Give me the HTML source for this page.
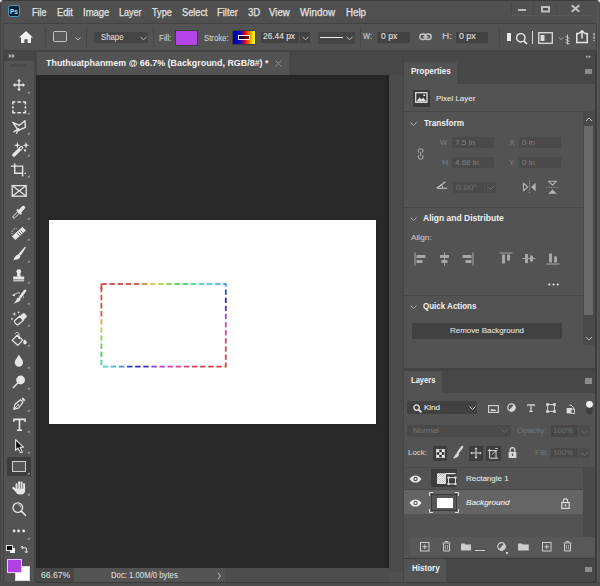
<!DOCTYPE html>
<html><head><meta charset="utf-8">
<style>
*{margin:0;padding:0;box-sizing:border-box}
html,body{width:600px;height:586px;overflow:hidden;background:#505050}
body{position:relative;font-family:"Liberation Sans",sans-serif}
.a{position:absolute;display:block;overflow:visible}
.t{position:absolute;white-space:nowrap;line-height:1;transform-origin:0 0}
</style></head>
<body>
<div class="a" style="left:0px;top:0px;width:600px;height:586px;background:#505050;"></div>
<div class="a" style="left:0px;top:0px;width:600px;height:1px;background:#3a3a3a;"></div>
<div class="a" style="left:0px;top:0px;width:1px;height:586px;background:#434343;"></div>
<div class="a" style="left:1px;top:23px;width:2px;height:563px;background:#525252;"></div>
<div class="a" style="left:597px;top:4px;width:1px;height:582px;background:#5a5a5a;"></div>
<div class="a" style="left:7.7px;top:5px;width:12.5px;height:12px;background:#0a2236;border:1.2px solid #4a9cc2;border-radius:2.5px"></div>
<div class="a" style="left:511px;top:0px;width:1px;height:16px;background:#484848;"></div>
<div class="a" style="left:533px;top:0px;width:1px;height:16px;background:#484848;"></div>
<div class="a" style="left:556px;top:0px;width:1px;height:16px;background:#484848;"></div>
<div class="a" style="left:511px;top:15px;width:82px;height:1px;background:#595959;"></div>
<div class="a" style="left:518px;top:9.3px;width:8.3px;height:2.2px;background:#bdbdbd;"></div>
<svg class="a" style="left:540.5px;top:5.8px;" width="9" height="6.5" viewBox="0 0 9 6.5"><rect x="1" y="1" width="7" height="4.5" stroke="#bdbdbd" stroke-width="2" fill="#4a4a4a"/></svg>
<svg class="a" style="left:571px;top:5px;" width="9" height="7" viewBox="0 0 9 7"><path d="M0.7 0.3L8.3 6.7M8.3 0.3L0.7 6.7" stroke="#c0c0c0" stroke-width="2"/></svg>
<div class="a" style="left:3px;top:23px;width:594px;height:28px;background:#535353;border:1px solid #434343"></div>
<svg class="a" style="left:19px;top:31px;" width="14" height="12" viewBox="0 0 14 12"><path d="M7 0L14 6.5H12V12H8.6V8.3H5.4V12H2V6.5H0Z" fill="#f0f0f0"/></svg>
<div class="a" style="left:45px;top:27px;width:1px;height:20px;background:#484848;"></div>
<div class="a" style="left:53px;top:31px;width:14px;height:11px;background:#5a5a5a;border:1.4px solid #c4c4c4;border-radius:1.5px"></div>
<svg class="a" style="left:74.5px;top:37px;" width="6" height="4" viewBox="0 0 6 4"><path d="M0.5 0.5L3 3L5.5 0.5" stroke="#b8b8b8" stroke-width="1" fill="none"/></svg>
<div class="a" style="left:86px;top:27px;width:1px;height:20px;background:#484848;"></div>
<div class="a" style="left:94px;top:32px;width:54px;height:11px;background:#454545;"></div>
<svg class="a" style="left:140px;top:36px;" width="7" height="5" viewBox="0 0 7 5"><path d="M0.5 0.8L3.5 3.8L6.5 0.8" stroke="#bbb" stroke-width="1" fill="none"/></svg>
<div class="a" style="left:153px;top:27px;width:1px;height:20px;background:#484848;"></div>
<div class="a" style="left:175.5px;top:31px;width:21.5px;height:13.5px;background:#b244e8;outline:1px solid #3e3e3e"></div>
<div class="a" style="left:233px;top:31px;width:21.5px;height:13px;background:linear-gradient(90deg,#0000a8 0%,#0808c0 33%,#d00028 52%,#f03000 62%,#ff9800 78%,#ffee00 92%,#ffff20 100%);outline:1px solid #3e3e3e"></div>
<div class="a" style="left:238px;top:34.8px;width:12px;height:5px;background:rgba(20,0,10,0.6);border:1px solid #f0f0f0"></div>
<div class="a" style="left:260.5px;top:32px;width:38.5px;height:11px;background:#424242;"></div>
<div class="a" style="left:300px;top:32px;width:10px;height:11px;background:#424242;"></div>
<svg class="a" style="left:302px;top:36px;" width="7" height="5" viewBox="0 0 7 5"><path d="M0.5 0.8L3.5 3.8L6.5 0.8" stroke="#bbb" stroke-width="1" fill="none"/></svg>
<div class="a" style="left:317.5px;top:32px;width:37px;height:11.5px;background:#454545;"></div>
<div class="a" style="left:319.5px;top:36.6px;width:23px;height:1.8px;background:#f0f0f0;"></div>
<svg class="a" style="left:346px;top:36px;" width="7" height="5" viewBox="0 0 7 5"><path d="M0.5 0.8L3.5 3.8L6.5 0.8" stroke="#bbb" stroke-width="1" fill="none"/></svg>
<div class="a" style="left:359.5px;top:27px;width:1px;height:20px;background:#484848;"></div>
<div class="a" style="left:377px;top:32px;width:32.5px;height:11px;background:#424242;"></div>
<svg class="a" style="left:419px;top:33px;" width="14" height="8" viewBox="0 0 14 8"><rect x="0.8" y="1" width="6" height="5.5" rx="2.7" stroke="#c8c8c8" stroke-width="1.4" fill="none"/><rect x="6.2" y="1" width="6" height="5.5" rx="2.7" stroke="#c8c8c8" stroke-width="1.4" fill="none"/><path d="M4 3.8H9.5" stroke="#c8c8c8" stroke-width="1.3"/></svg>
<div class="a" style="left:455.6px;top:31.5px;width:32.5px;height:11px;background:#424242;"></div>
<div class="a" style="left:498.8px;top:27px;width:1px;height:20px;background:#484848;"></div>
<div class="a" style="left:507px;top:33px;width:3.5px;height:8px;background:#e8e8e8;"></div>
<svg class="a" style="left:515px;top:31.5px;" width="14" height="14" viewBox="0 0 14 14"><circle cx="5.8" cy="5.8" r="4.2" stroke="#e8e8e8" stroke-width="1.4" fill="none"/><path d="M8.8 8.8L12 12" stroke="#e8e8e8" stroke-width="1.7"/></svg>
<div class="a" style="left:532.2px;top:31px;width:1px;height:13px;background:#d8d8d8;"></div>
<svg class="a" style="left:538px;top:32px;" width="15" height="12" viewBox="0 0 15 12"><rect x="0.7" y="0.7" width="13.6" height="10.6" stroke="#dcdcdc" stroke-width="1.3" fill="none"/><rect x="2.5" y="3" width="4" height="6" fill="#dcdcdc"/></svg>
<svg class="a" style="left:558px;top:34px;" width="16" height="11" viewBox="0 0 16 11"><path d="M1 3.5L3 5.5L5 3.5" stroke="#bbb" stroke-width="0.9" fill="none"/><path d="M9.5 0.5V10.5M7.5 2.5L11.5 4.5M7.5 5.5L11.5 7.5M7.5 8.5L11.5 10" stroke="#c8c8c8" stroke-width="1" fill="none"/></svg>
<svg class="a" style="left:575.5px;top:30px;" width="12" height="14" viewBox="0 0 12 14"><path d="M3.6 3.5H0.8V12.6H11.2V3.5H8.4" stroke="#e8e8e8" stroke-width="1.5" fill="none"/><path d="M6 0.8V8.6M3.4 3.2L6 0.8L8.6 3.2" stroke="#e8e8e8" stroke-width="1.5" fill="none"/></svg>
<svg class="a" style="left:592.5px;top:33px;" width="2" height="8" viewBox="0 0 2 8"><path d="M1 0V8" stroke="#b8b8b8" stroke-width="1.5" stroke-dasharray="2.5 1"/></svg>
<div class="a" style="left:36px;top:51px;width:367px;height:24px;background:#474747;"></div>
<div class="a" style="left:37px;top:52px;width:252px;height:23px;background:#535353;"></div>
<svg class="a" style="left:274.5px;top:60px;" width="7" height="7" viewBox="0 0 7 7"><path d="M0.5 0.5L6.5 6.5M6.5 0.5L0.5 6.5" stroke="#8e8e8e" stroke-width="1"/></svg>
<div class="a" style="left:36px;top:75px;width:353px;height:493px;background:#282828;"></div>
<div class="a" style="left:48px;top:219px;width:329px;height:206px;background:#252525;"></div>
<div class="a" style="left:49px;top:220px;width:327px;height:204px;background:#ffffff;"></div>
<div class="a" style="left:3px;top:51px;width:31px;height:532px;background:#535353;"></div>
<div class="a" style="left:34px;top:51px;width:2px;height:532px;background:#454545;"></div>
<div class="a" style="left:3px;top:51px;width:31px;height:10px;background:#474747;"></div>
<div class="a" style="left:3px;top:51px;width:1px;height:532px;background:#404040;"></div>
<svg class="a" style="left:8.7px;top:53.6px;" width="6" height="4" viewBox="0 0 6 4"><path d="M0.3 0.3L2.3 2L0.3 3.7ZM3.3 0.3L5.3 2L3.3 3.7Z" fill="#c8c8c8" stroke="#c8c8c8" stroke-width="0.5"/></svg>
<div class="a" style="left:11px;top:64px;width:16px;height:3px;background:#4a4a4a;"></div>
<svg class="a" style="left:11px;top:77.3px;" width="16" height="16" viewBox="0 0 16 16"><path d="M8 3.5V12.5M3.5 8H12.5" stroke="#e6e6e6" stroke-width="1.3"/><path d="M8 1.8L10 4.3H6ZM8 14.2L10 11.7H6ZM1.8 8L4.3 6V10ZM14.2 8L11.7 6V10Z" fill="#e6e6e6"/></svg>
<svg class="a" style="left:26.8px;top:90.5px;" width="3" height="3" viewBox="0 0 3 3"><path d="M2.6 0.2V2.6H0.2Z" fill="#b4b4b4"/></svg>
<svg class="a" style="left:11px;top:98.5px;" width="16" height="16" viewBox="0 0 16 16"><path d="M1.9 5.5V3H4.4M6.4 3H9.9M11.9 3H14.4V5.5M14.4 7.2V9.6M14.4 11.3V13.7H11.9M9.9 13.7H6.4M4.4 13.7H1.9V11.3M1.9 9.6V7.2" stroke="#e6e6e6" stroke-width="1.5" fill="none"/></svg>
<svg class="a" style="left:26.8px;top:111.7px;" width="3" height="3" viewBox="0 0 3 3"><path d="M2.6 0.2V2.6H0.2Z" fill="#b4b4b4"/></svg>
<svg class="a" style="left:11px;top:119px;" width="16" height="16" viewBox="0 0 16 16"><path d="M1.9 3.3L8.3 6.3L14 1.8L14.4 8.3L7.3 11.4Z" stroke="#e6e6e6" stroke-width="1.4" fill="none" stroke-linejoin="round"/><path d="M2.4 12.9L7.3 10.4M7.3 10.4L5.3 14.8" stroke="#e6e6e6" stroke-width="1.3"/><circle cx="7.3" cy="10.6" r="1.6" fill="#e6e6e6"/></svg>
<svg class="a" style="left:26.8px;top:132.2px;" width="3" height="3" viewBox="0 0 3 3"><path d="M2.6 0.2V2.6H0.2Z" fill="#b4b4b4"/></svg>
<svg class="a" style="left:11px;top:140.5px;" width="16" height="16" viewBox="0 0 16 16"><path d="M2.9 14L10.6 6.6" stroke="#e6e6e6" stroke-width="3.4" stroke-linecap="round"/><path d="M9.4 7.8L10.8 6.4" stroke="#3a3a3a" stroke-width="1.4"/><path d="M6.3 0.8L7.1 3.5L9.8 4.3L7.1 5.1L6.3 7.8L5.5 5.1L2.8 4.3L5.5 3.5Z M15 0.8L15.8 3.5L18.5 4.3L15.8 5.1L15 7.8L14.2 5.1L11.5 4.3L14.2 3.5Z" fill="#e6e6e6"/><circle cx="14" cy="9.4" r="1.1" fill="#e6e6e6"/></svg>
<svg class="a" style="left:26.8px;top:153.7px;" width="3" height="3" viewBox="0 0 3 3"><path d="M2.6 0.2V2.6H0.2Z" fill="#b4b4b4"/></svg>
<svg class="a" style="left:11px;top:161.8px;" width="16" height="16" viewBox="0 0 16 16"><path d="M3.7 1.5V11.3H12M0 4.1H11.6V14.5" stroke="#e6e6e6" stroke-width="1.4" fill="none"/><path d="M13.5 11.3H15" stroke="#e6e6e6" stroke-width="1.3"/></svg>
<svg class="a" style="left:26.8px;top:175.0px;" width="3" height="3" viewBox="0 0 3 3"><path d="M2.6 0.2V2.6H0.2Z" fill="#b4b4b4"/></svg>
<svg class="a" style="left:11px;top:183px;" width="16" height="16" viewBox="0 0 16 16"><rect x="1.2" y="2.6" width="14" height="10.6" stroke="#e6e6e6" stroke-width="1.3" fill="none"/><path d="M1.2 2.6L15.2 13.2M15.2 2.6L1.2 13.2" stroke="#e6e6e6" stroke-width="1.2"/></svg>
<svg class="a" style="left:11px;top:203.8px;" width="16" height="16" viewBox="0 0 16 16"><path d="M2.2 12.2L7.6 6.8L9.2 8.4L3.8 13.8Q2.8 14.6 2.2 13.8Q1.4 13 2.2 12.2Z" stroke="#e6e6e6" stroke-width="1" fill="none" stroke-linejoin="round"/><path d="M6.6 6.2L9.8 9.4" stroke="#e6e6e6" stroke-width="2.2" stroke-linecap="round"/><path d="M8.6 7.4L12.4 3.6" stroke="#e6e6e6" stroke-width="3.6" stroke-linecap="round"/></svg>
<svg class="a" style="left:26.8px;top:217.0px;" width="3" height="3" viewBox="0 0 3 3"><path d="M2.6 0.2V2.6H0.2Z" fill="#b4b4b4"/></svg>
<svg class="a" style="left:11px;top:225.2px;" width="16" height="16" viewBox="0 0 16 16"><path d="M2.6 13.2L13.2 3.6" stroke="#e6e6e6" stroke-width="5" stroke-linecap="butt"/><path d="M6.2 8.2L8.6 10.8M7.8 6.8L10.2 9.4M9.4 5.4L11.6 7.8" stroke="#535353" stroke-width="0.9"/><path d="M1 9C0.4 5.8 2.6 3.3 5.6 3.4" stroke="#e6e6e6" stroke-width="0.9" stroke-dasharray="1 0.9" fill="none"/></svg>
<svg class="a" style="left:26.8px;top:238.39999999999998px;" width="3" height="3" viewBox="0 0 3 3"><path d="M2.6 0.2V2.6H0.2Z" fill="#b4b4b4"/></svg>
<svg class="a" style="left:11px;top:246.3px;" width="16" height="16" viewBox="0 0 16 16"><path d="M14.2 1.4L8.6 7.6L9.6 8.6Z" fill="#e6e6e6" stroke="#e6e6e6" stroke-width="1.2" stroke-linejoin="round"/><path d="M5.4 9.4C6.8 7.8 8.8 8.2 9.2 9.4C9.6 11 8.4 13.4 5.8 13.5C4.6 13.6 3.6 13.9 2.3 14.6C3 13.2 3.3 12.4 3.6 11.2C3.9 10.4 4.6 9.9 5.4 9.4Z" fill="#e6e6e6"/></svg>
<svg class="a" style="left:26.8px;top:259.5px;" width="3" height="3" viewBox="0 0 3 3"><path d="M2.6 0.2V2.6H0.2Z" fill="#b4b4b4"/></svg>
<svg class="a" style="left:11px;top:267.5px;" width="16" height="16" viewBox="0 0 16 16"><circle cx="7.8" cy="3.6" r="2.4" fill="#e6e6e6"/><path d="M6.4 4.5H9.2L9.8 8.8H5.8Z" fill="#e6e6e6"/><path d="M2.2 8.5H13.2V11.5H2.2Z" fill="#e6e6e6"/><path d="M2.2 12.1H13.2V13.4H2.2Z" fill="#cfcfcf"/></svg>
<svg class="a" style="left:26.8px;top:280.7px;" width="3" height="3" viewBox="0 0 3 3"><path d="M2.6 0.2V2.6H0.2Z" fill="#b4b4b4"/></svg>
<svg class="a" style="left:11px;top:289px;" width="16" height="16" viewBox="0 0 16 16"><path d="M14 1.8L9.4 8" stroke="#e6e6e6" stroke-width="2.6" stroke-linecap="round"/><path d="M5.6 10.7C6.1 8.4 8.3 8 9.4 9.1C10 10.3 9.2 12.6 6.8 12.9L2.6 14.8Z" fill="#e6e6e6"/><path d="M0.8 6.6L3.6 4.6L4.1 7.2Z" fill="#e6e6e6"/><path d="M3.4 5.6C5.5 3.5 7.4 3.6 9 4.2" stroke="#e6e6e6" stroke-width="0.9" fill="none"/><path d="M12.2 6.6C12.8 8 12.6 9.2 11.6 10.2" stroke="#e6e6e6" stroke-width="0.8" stroke-dasharray="0.8 0.8" fill="none"/></svg>
<svg class="a" style="left:26.8px;top:302.2px;" width="3" height="3" viewBox="0 0 3 3"><path d="M2.6 0.2V2.6H0.2Z" fill="#b4b4b4"/></svg>
<svg class="a" style="left:11px;top:310.5px;" width="16" height="16" viewBox="0 0 16 16"><path d="M8.6 5.2L11.6 2.6A1.6 1.6 0 0 1 13.9 2.7L15.4 4.3A1.6 1.6 0 0 1 15.3 6.6L12.2 9.4Z" fill="#e6e6e6"/><path d="M8.6 5.2L4 9.3A1.7 1.7 0 0 0 3.9 11.7L5.2 13.1A1.7 1.7 0 0 0 7.6 13.2L12.2 9.4Z" stroke="#e6e6e6" stroke-width="1.2" fill="none"/><path d="M3.3 0.8L3.8 2.6L5.6 3.1L3.8 3.6L3.3 5.4L2.8 3.6L1 3.1L2.8 2.6Z" fill="#e6e6e6"/><circle cx="7.6" cy="1.4" r="0.9" fill="#e6e6e6"/><circle cx="0.9" cy="7.9" r="0.9" fill="#e6e6e6"/></svg>
<svg class="a" style="left:26.8px;top:323.7px;" width="3" height="3" viewBox="0 0 3 3"><path d="M2.6 0.2V2.6H0.2Z" fill="#b4b4b4"/></svg>
<svg class="a" style="left:11px;top:331px;" width="16" height="16" viewBox="0 0 16 16"><path d="M6.2 4.3L11.8 9.2L6.8 14.3L1.2 9.2Z" stroke="#e6e6e6" stroke-width="1.2" fill="none" stroke-linejoin="round"/><path d="M4.2 3.2C4.6 1 7.2 0.9 7.8 2.6L8.2 6.6" stroke="#e6e6e6" stroke-width="1" fill="none"/><circle cx="8.2" cy="7.2" r="0.9" fill="#e6e6e6"/><path d="M13.9 8.2C14.8 9.5 15.8 10.5 15.8 11.6A1.8 1.8 0 0 1 12.2 11.6C12.2 10.5 13.1 9.5 13.9 8.2Z" fill="#e6e6e6"/></svg>
<svg class="a" style="left:26.8px;top:344.2px;" width="3" height="3" viewBox="0 0 3 3"><path d="M2.6 0.2V2.6H0.2Z" fill="#b4b4b4"/></svg>
<svg class="a" style="left:11px;top:353px;" width="16" height="16" viewBox="0 0 16 16"><path d="M7.9 1.4C9 4 12.1 6.6 12.1 9.6A4.2 4.2 0 0 1 3.7 9.6C3.7 6.6 6.8 4 7.9 1.4Z" fill="#e6e6e6"/></svg>
<svg class="a" style="left:26.8px;top:366.2px;" width="3" height="3" viewBox="0 0 3 3"><path d="M2.6 0.2V2.6H0.2Z" fill="#b4b4b4"/></svg>
<svg class="a" style="left:11px;top:374px;" width="16" height="16" viewBox="0 0 16 16"><circle cx="9.6" cy="6" r="4.4" fill="#e6e6e6"/><path d="M6.6 9.2L2.4 13.6" stroke="#e6e6e6" stroke-width="1.5" stroke-linecap="round"/></svg>
<svg class="a" style="left:26.8px;top:387.2px;" width="3" height="3" viewBox="0 0 3 3"><path d="M2.6 0.2V2.6H0.2Z" fill="#b4b4b4"/></svg>
<svg class="a" style="left:11px;top:395.5px;" width="16" height="16" viewBox="0 0 16 16"><path d="M2.7 13.3L4 8.2L9.6 3.8L12 6.2L7.7 11.9Z" stroke="#e6e6e6" stroke-width="1.2" fill="none" stroke-linejoin="round"/><path d="M10.4 2.8L11.8 1.5L14.4 4.1L13 5.5Z" fill="#e6e6e6"/><path d="M2.9 13.1L6.6 9.4" stroke="#e6e6e6" stroke-width="0.9"/><circle cx="7.1" cy="8.8" r="0.9" fill="#e6e6e6"/></svg>
<svg class="a" style="left:26.8px;top:408.7px;" width="3" height="3" viewBox="0 0 3 3"><path d="M2.6 0.2V2.6H0.2Z" fill="#b4b4b4"/></svg>
<svg class="a" style="left:11px;top:416.5px;" width="16" height="16" viewBox="0 0 16 16"><path d="M2.9 4.8V2.4H14V4.8M8.45 2.4V13.3M5.9 13.3H11" stroke="#e6e6e6" stroke-width="1.6" fill="none"/></svg>
<svg class="a" style="left:26.8px;top:429.7px;" width="3" height="3" viewBox="0 0 3 3"><path d="M2.6 0.2V2.6H0.2Z" fill="#b4b4b4"/></svg>
<svg class="a" style="left:11px;top:437.5px;" width="16" height="16" viewBox="0 0 16 16"><path d="M4.6 1.6V12.4L7 10L9.6 14.8L11.4 13.9L9 9.3H12.6Z" fill="#111" stroke="#e6e6e6" stroke-width="1.1" stroke-linejoin="round"/></svg>
<svg class="a" style="left:26.8px;top:450.7px;" width="3" height="3" viewBox="0 0 3 3"><path d="M2.6 0.2V2.6H0.2Z" fill="#b4b4b4"/></svg>
<div class="a" style="left:6.6px;top:457.2px;width:24.4px;height:18.5px;background:#3d3d3d;"></div>
<div class="a" style="left:12px;top:460.7px;width:14.3px;height:11.4px;background:#565656;border:1.5px solid #cdcdcd"></div>
<svg class="a" style="left:26.8px;top:472.2px;" width="3" height="3" viewBox="0 0 3 3"><path d="M2.6 0.2V2.6H0.2Z" fill="#b4b4b4"/></svg>
<svg class="a" style="left:11px;top:480px;" width="16" height="16" viewBox="0 0 16 16"><g stroke="#e6e6e6" stroke-linecap="round" fill="none"><path d="M5.6 4.2V9.5M8.1 2.2V9M10.6 2.6V9M13 4.4V9.8" stroke-width="2.1"/><path d="M2.4 8L5.6 11" stroke-width="2.3"/></g><path d="M4.6 8.8H14.1V10.6C14.1 13.2 12.4 14.6 10 14.6H8.6C7 14.6 6 13.8 5 12.6L4 11Z" fill="#e6e6e6"/><path d="M6.85 3.5V8.4M9.35 3.5V8.4M11.8 4.5V8.6" stroke="#535353" stroke-width="0.55"/></svg>
<svg class="a" style="left:26.8px;top:493.2px;" width="3" height="3" viewBox="0 0 3 3"><path d="M2.6 0.2V2.6H0.2Z" fill="#b4b4b4"/></svg>
<svg class="a" style="left:11px;top:501px;" width="16" height="16" viewBox="0 0 16 16"><circle cx="6.8" cy="6.6" r="4.8" stroke="#e6e6e6" stroke-width="1.3" fill="none"/><path d="M10.3 10.1L14.4 14.3" stroke="#e6e6e6" stroke-width="1.6" stroke-linecap="round"/><path d="M6.8 3.6A3 3 0 0 1 9.8 6.6" stroke="#e6e6e6" stroke-width="0.7" fill="none"/></svg>
<svg class="a" style="left:11px;top:522.7px;" width="16" height="16" viewBox="0 0 16 16"><circle cx="3.1" cy="8" r="1.4" fill="#e6e6e6"/><circle cx="7.6" cy="8" r="1.4" fill="#e6e6e6"/><circle cx="12.7" cy="8" r="1.4" fill="#e6e6e6"/></svg>
<svg class="a" style="left:26.8px;top:536.7px;" width="3" height="3" viewBox="0 0 3 3"><path d="M2.6 0.2V2.6H0.2Z" fill="#b4b4b4"/></svg>
<div class="a" style="left:9.5px;top:548px;width:5.2px;height:5.2px;background:#f0f0f0;"></div>
<div class="a" style="left:7.3px;top:545.9px;width:4.6px;height:4.6px;background:#000;outline:0.8px solid #e8e8e8"></div>
<svg class="a" style="left:20px;top:545px;" width="10" height="10" viewBox="0 0 10 10"><path d="M2.2 1.3V4.3M0.8 2.6L2.2 1.1L3.6 2.6" stroke="#e0e0e0" stroke-width="1" fill="none"/><path d="M2.2 2.8H6.3V7.6M4.9 6.3L6.3 7.9L7.7 6.3" stroke="#e0e0e0" stroke-width="1" fill="none"/></svg>
<div class="a" style="left:14.6px;top:566.2px;width:15.3px;height:14.6px;background:#ffffff;border:1px solid #d8d8d8"></div>
<div class="a" style="left:7px;top:558.9px;width:15px;height:14.1px;background:#b03ee0;border:1px solid #e8c8f8"></div>
<div class="a" style="left:389px;top:75px;width:15px;height:493px;background:#4b4b4b;"></div>
<div class="a" style="left:385.5px;top:75px;width:3px;height:493px;background:#242424;"></div>
<div class="a" style="left:403px;top:51px;width:1px;height:535px;background:#444444;"></div>
<div class="a" style="left:404px;top:51px;width:193px;height:535px;background:#474747;"></div>
<div class="a" style="left:595px;top:51px;width:2px;height:535px;background:#3c3c3c;"></div>
<div class="a" style="left:404px;top:51px;width:191px;height:11px;background:#474747;"></div>
<svg class="a" style="left:586.3px;top:54.8px;" width="5" height="3.4" viewBox="0 0 5 3.4"><path d="M0.2 0.2L2 1.7L0.2 3.2ZM2.8 0.2L4.6 1.7L2.8 3.2Z" fill="#c4c4c4"/></svg>
<div class="a" style="left:404px;top:62px;width:191px;height:306px;background:#535353;"></div>
<div class="a" style="left:457px;top:62px;width:138px;height:21.5px;background:#474747;"></div>
<div class="a" style="left:585px;top:69px;width:6.5px;height:5.3px;background:#8c8c8c;"></div>
<div class="a" style="left:413px;top:89.7px;width:16.5px;height:17px;background:#3a3a3a;"></div>
<svg class="a" style="left:415px;top:92px;" width="13" height="12" viewBox="0 0 13 12"><rect x="0.7" y="0.7" width="11.3" height="9.6" stroke="#e8e8e8" stroke-width="1.2" fill="none"/><path d="M1.5 9.6L4.5 5.5L6.5 7.5L8.2 5.8L11.3 9.6Z" fill="#e8e8e8"/><circle cx="9.2" cy="3.2" r="0.9" fill="#e8e8e8"/></svg>
<div class="a" style="left:404px;top:111px;width:179px;height:1px;background:#474747;"></div>
<div class="a" style="left:583px;top:111px;width:12px;height:234px;background:#4a4a4a;"></div>
<div class="a" style="left:584.3px;top:126px;width:9px;height:189px;background:#6a6a6a;"></div>
<svg class="a" style="left:585px;top:117px;" width="8" height="5" viewBox="0 0 8 5"><path d="M1 4L4 1L7 4" stroke="#bcbcbc" stroke-width="1" fill="none"/></svg>
<svg class="a" style="left:585px;top:336px;" width="8" height="5" viewBox="0 0 8 5"><path d="M1 1L4 4L7 1" stroke="#bcbcbc" stroke-width="1" fill="none"/></svg>
<svg class="a" style="left:409.5px;top:121.5px;" width="7" height="4" viewBox="0 0 7 4"><path d="M0.5 0.5L3.5 3.5L6.5 0.5" stroke="#b0b0b0" stroke-width="1" fill="none"/></svg>
<div class="a" style="left:452px;top:137px;width:41.5px;height:11.3px;background:#4a4a4a;"></div>
<div class="a" style="left:519.3px;top:137px;width:41.7px;height:11.3px;background:#4a4a4a;"></div>
<div class="a" style="left:452px;top:157.3px;width:41.5px;height:10.7px;background:#4a4a4a;"></div>
<div class="a" style="left:519.3px;top:157.3px;width:41.7px;height:10.7px;background:#4a4a4a;"></div>
<svg class="a" style="left:417px;top:147.5px;" width="8" height="12" viewBox="0 0 8 12"><path d="M2 4.4C0.6 3.6 0.9 0.8 3.6 0.8C6.3 0.8 6.6 3.6 5.2 4.4M2 7.6C0.6 8.4 0.9 11.2 3.6 11.2C6.3 11.2 6.6 8.4 5.2 7.6M3.6 3.8V8.2" stroke="#a8a8a8" stroke-width="1.1" fill="none"/></svg>
<svg class="a" style="left:436px;top:181px;" width="12" height="8" viewBox="0 0 12 8"><path d="M0.8 7.2H11.2M0.8 7.2L9.5 0.8" stroke="#c8c8c8" stroke-width="1.1" fill="none"/><path d="M5.5 3.8A4 4 0 0 1 6.5 7.2" stroke="#c8c8c8" stroke-width="0.9" fill="none"/></svg>
<div class="a" style="left:453.3px;top:181.7px;width:30.7px;height:11.6px;background:#4a4a4a;"></div>
<div class="a" style="left:485px;top:181.7px;width:10.7px;height:11.6px;background:#4a4a4a;"></div>
<svg class="a" style="left:487px;top:186px;" width="7" height="4" viewBox="0 0 7 4"><path d="M0.5 0.5L3.5 3.5L6.5 0.5" stroke="#777" stroke-width="0.9" fill="none"/></svg>
<svg class="a" style="left:522px;top:180px;" width="15" height="14" viewBox="0 0 15 14"><path d="M1.5 3.2V10.8L5.6 7Z" stroke="#b4b4b4" stroke-width="1.1" fill="none" stroke-linejoin="round"/><path d="M13.6 2.8V11.2L9.2 7Z" fill="#b4b4b4"/><path d="M7.5 1V13" stroke="#a0a0a0" stroke-width="0.8" stroke-dasharray="1.3 0.9"/></svg>
<svg class="a" style="left:546px;top:179.5px;" width="13" height="15" viewBox="0 0 13 15"><path d="M2.6 1.2H10.4L6.5 5.2Z" stroke="#b4b4b4" stroke-width="1.1" fill="none" stroke-linejoin="round"/><path d="M2.2 13.8H10.8L6.5 9.5Z" fill="#b4b4b4"/><path d="M0.5 7.3H12.5" stroke="#a0a0a0" stroke-width="0.8" stroke-dasharray="1.3 0.9"/></svg>
<div class="a" style="left:404px;top:206.5px;width:179px;height:1px;background:#474747;"></div>
<svg class="a" style="left:409.5px;top:216.8px;" width="7" height="4" viewBox="0 0 7 4"><path d="M0.5 0.5L3.5 3.5L6.5 0.5" stroke="#b0b0b0" stroke-width="1" fill="none"/></svg>
<svg class="a" style="left:414px;top:252px;" width="13" height="14" viewBox="0 0 13 14"><path d="M1 0.5V13.5" stroke="#a6a6a6" stroke-width="1"/><rect x="2.5" y="3" width="9" height="3" fill="#a6a6a6"/><rect x="2.5" y="8" width="6" height="3" fill="#a6a6a6"/></svg>
<svg class="a" style="left:438px;top:252px;" width="13" height="14" viewBox="0 0 13 14"><path d="M6.5 0.5V13.5" stroke="#a6a6a6" stroke-width="1"/><rect x="2" y="3" width="9" height="3" fill="#a6a6a6"/><rect x="3.5" y="8" width="6" height="3" fill="#a6a6a6"/></svg>
<svg class="a" style="left:461px;top:252px;" width="13" height="14" viewBox="0 0 13 14"><path d="M12 0.5V13.5" stroke="#a6a6a6" stroke-width="1"/><rect x="1.5" y="3" width="9" height="3" fill="#a6a6a6"/><rect x="4.5" y="8" width="6" height="3" fill="#a6a6a6"/></svg>
<svg class="a" style="left:499px;top:252px;" width="14" height="13" viewBox="0 0 14 13"><path d="M0.5 1H13.5" stroke="#a6a6a6" stroke-width="1"/><rect x="3" y="2.5" width="3" height="9" fill="#a6a6a6"/><rect x="8" y="2.5" width="3" height="6" fill="#a6a6a6"/></svg>
<svg class="a" style="left:522px;top:252px;" width="14" height="13" viewBox="0 0 14 13"><path d="M0.5 6.5H13.5" stroke="#a6a6a6" stroke-width="1"/><rect x="3" y="2" width="3" height="9" fill="#a6a6a6"/><rect x="8" y="3.5" width="3" height="6" fill="#a6a6a6"/></svg>
<svg class="a" style="left:546px;top:252px;" width="14" height="13" viewBox="0 0 14 13"><path d="M0.5 12H13.5" stroke="#a6a6a6" stroke-width="1"/><rect x="3" y="1.5" width="3" height="9" fill="#a6a6a6"/><rect x="8" y="4.5" width="3" height="6" fill="#a6a6a6"/></svg>
<svg class="a" style="left:548px;top:282.5px;" width="12" height="3" viewBox="0 0 12 3"><circle cx="1.4" cy="1.5" r="1.1" fill="#e4e4e4"/><circle cx="5.6" cy="1.5" r="1.1" fill="#e4e4e4"/><circle cx="9.8" cy="1.5" r="1.1" fill="#e4e4e4"/></svg>
<div class="a" style="left:404px;top:295px;width:179px;height:1px;background:#474747;"></div>
<svg class="a" style="left:409.5px;top:305px;" width="7" height="4" viewBox="0 0 7 4"><path d="M0.5 0.5L3.5 3.5L6.5 0.5" stroke="#b0b0b0" stroke-width="1" fill="none"/></svg>
<div class="a" style="left:411.7px;top:322.8px;width:150px;height:16.4px;background:#414141;"></div>
<div class="a" style="left:404px;top:368px;width:191px;height:3px;background:#424242;"></div>
<div class="a" style="left:404px;top:371px;width:191px;height:186.5px;background:#535353;"></div>
<div class="a" style="left:442px;top:371px;width:153px;height:21.5px;background:#474747;"></div>
<div class="a" style="left:585px;top:378.3px;width:6.5px;height:5.4px;background:#8c8c8c;"></div>
<div class="a" style="left:407.3px;top:401px;width:69.4px;height:13.3px;background:#414141;"></div>
<svg class="a" style="left:412.5px;top:403.8px;" width="10" height="10" viewBox="0 0 10 10"><circle cx="3.6" cy="3.6" r="2.7" stroke="#e6e6e6" stroke-width="1.3" fill="none"/><path d="M5.6 5.6L8.4 8.4" stroke="#e6e6e6" stroke-width="1.7"/></svg>
<svg class="a" style="left:468.5px;top:406px;" width="7" height="4" viewBox="0 0 7 4"><path d="M0.5 0.5L3.5 3.5L6.5 0.5" stroke="#c8c8c8" stroke-width="1" fill="none"/></svg>
<svg class="a" style="left:487.5px;top:404.5px;" width="11" height="8" viewBox="0 0 11 8"><rect x="0.6" y="0.6" width="9.8" height="6.8" stroke="#d8d8d8" stroke-width="1.1" fill="none"/><path d="M2.2 6L3.8 3.6L5.2 5L6.4 4L8.6 6Z" fill="#d8d8d8"/></svg>
<svg class="a" style="left:507px;top:403.3px;" width="9" height="9" viewBox="0 0 9 9"><circle cx="4.5" cy="4.5" r="3.7" stroke="#d8d8d8" stroke-width="1.2" fill="none"/><path d="M4.5 0.8A3.7 3.7 0 0 1 4.5 8.2Z" fill="#d8d8d8" transform="rotate(40 4.5 4.5)"/></svg>
<svg class="a" style="left:527px;top:404.3px;" width="8" height="8" viewBox="0 0 8 8"><path d="M0.8 2.2V0.8H7.2V2.2M4 0.8V7.4M2.3 7.4H5.7" stroke="#d8d8d8" stroke-width="1.2" fill="none"/></svg>
<svg class="a" style="left:545.5px;top:403.3px;" width="10" height="10" viewBox="0 0 10 10"><rect x="1.6" y="1.6" width="6.8" height="6.8" stroke="#d8d8d8" stroke-width="1" fill="none"/><rect x="0.2" y="0.2" width="2.6" height="2.6" fill="#d8d8d8"/><rect x="7.2" y="0.2" width="2.6" height="2.6" fill="#d8d8d8"/><rect x="0.2" y="7.2" width="2.6" height="2.6" fill="#d8d8d8"/><rect x="7.2" y="7.2" width="2.6" height="2.6" fill="#d8d8d8"/></svg>
<svg class="a" style="left:566px;top:403.5px;" width="9" height="10" viewBox="0 0 9 10"><path d="M3.5 1.2L5.2 1.2L7.6 3.6V5" stroke="#d8d8d8" stroke-width="1" fill="none"/><rect x="0.6" y="4" width="5.4" height="5.4" fill="#d8d8d8"/><rect x="5" y="5.2" width="3.4" height="4.2" fill="#535353" stroke="#d8d8d8" stroke-width="0.9"/></svg>
<svg class="a" style="left:584.5px;top:399.5px;" width="9" height="16" viewBox="0 0 9 16"><rect x="1.5" y="3.5" width="6" height="11" rx="3" fill="#3e3e3e"/><circle cx="4.5" cy="4.3" r="3.4" fill="#f0f0f0"/></svg>
<div class="a" style="left:407.3px;top:425px;width:103.4px;height:11.7px;background:#4a4a4a;"></div>
<svg class="a" style="left:501px;top:429px;" width="7" height="4" viewBox="0 0 7 4"><path d="M0.5 0.5L3.5 3.5L6.5 0.5" stroke="#6a6a6a" stroke-width="1" fill="none"/></svg>
<div class="a" style="left:550.7px;top:425px;width:27.6px;height:11.7px;background:#474747;"></div>
<div class="a" style="left:579px;top:425px;width:11px;height:11.7px;background:#4c4c4c;"></div>
<svg class="a" style="left:581px;top:429.5px;" width="7" height="4" viewBox="0 0 7 4"><path d="M0.5 0.5L3.5 3.5L6.5 0.5" stroke="#6a6a6a" stroke-width="1" fill="none"/></svg>
<div class="a" style="left:432.5px;top:445.8px;width:14.8px;height:14.8px;background:#3d3d3d;"></div>
<svg class="a" style="left:435.5px;top:448.8px;" width="9" height="9" viewBox="0 0 9 9"><rect x="0" y="0" width="9" height="9" fill="#2a2a2a"/><rect x="0.6" y="0.6" width="2.6" height="2.6" fill="#f0f0f0"/><rect x="5.8" y="0.6" width="2.6" height="2.6" fill="#f0f0f0"/><rect x="3.2" y="3.2" width="2.6" height="2.6" fill="#f0f0f0"/><rect x="0.6" y="5.8" width="2.6" height="2.6" fill="#f0f0f0"/><rect x="5.8" y="5.8" width="2.6" height="2.6" fill="#f0f0f0"/><rect x="0.3" y="0.3" width="8.4" height="8.4" stroke="#f0f0f0" stroke-width="0.6" fill="none"/></svg>
<svg class="a" style="left:451.5px;top:446px;" width="11" height="14" viewBox="0 0 11 14"><path d="M10.2 1L6 6.6" stroke="#d8d8d8" stroke-width="2.2" stroke-linecap="round"/><path d="M3.6 8.6C4.2 7 6 6.8 6.8 7.6C7.4 8.6 6.8 10.8 4.6 11.4L1.2 12.8C1.8 11.4 2.6 9.6 3.6 8.6Z" fill="#d8d8d8"/></svg>
<div class="a" style="left:468.6px;top:445.8px;width:14.7px;height:14.8px;background:#3d3d3d;"></div>
<svg class="a" style="left:470px;top:447.2px;" width="12" height="12" viewBox="0 0 12 12"><path d="M6 1.5V10.5M1.5 6H10.5" stroke="#d8d8d8" stroke-width="1"/><path d="M6 0.3L7.6 2.2H4.4ZM6 11.7L7.6 9.8H4.4ZM0.3 6L2.2 4.4V7.6ZM11.7 6L9.8 4.4V7.6Z" fill="#d8d8d8"/></svg>
<div class="a" style="left:485.6px;top:445.8px;width:15.1px;height:14.8px;background:#3d3d3d;"></div>
<svg class="a" style="left:487.3px;top:447.5px;" width="12" height="12" viewBox="0 0 12 12"><path d="M0.8 2.6H10.2M2.6 0.8V10.2H11.2M9 2.6V10.2" stroke="#d8d8d8" stroke-width="1" fill="none"/><path d="M5 6.5L9 2.6M8.2 0.5L10.8 0.5" stroke="#d8d8d8" stroke-width="0.9"/></svg>
<svg class="a" style="left:507.5px;top:447px;" width="9" height="11.5" viewBox="0 0 9 11.5"><path d="M2.2 4.8V3A2.3 2.3 0 0 1 6.8 3V4.8" stroke="#d8d8d8" stroke-width="1.2" fill="none"/><rect x="0.6" y="4.8" width="7.8" height="6.2" fill="#d8d8d8"/><rect x="3.9" y="6.6" width="1.2" height="2.4" fill="#535353"/></svg>
<div class="a" style="left:550.7px;top:447.7px;width:27.6px;height:10.6px;background:#474747;"></div>
<div class="a" style="left:579px;top:447.7px;width:11px;height:10.6px;background:#4c4c4c;"></div>
<svg class="a" style="left:581px;top:451.5px;" width="7" height="4" viewBox="0 0 7 4"><path d="M0.5 0.5L3.5 3.5L6.5 0.5" stroke="#6a6a6a" stroke-width="1" fill="none"/></svg>
<div class="a" style="left:404px;top:466.5px;width:179px;height:1px;background:#4c4c4c;"></div>
<div class="a" style="left:583px;top:466.5px;width:12px;height:70px;background:#4a4a4a;"></div>
<svg class="a" style="left:409px;top:474.5px;" width="13" height="8" viewBox="0 0 13 8"><path d="M0.5 4C2.5 1 4.5 0.5 6.5 0.5C8.5 0.5 10.5 1 12.5 4C10.5 7 8.5 7.5 6.5 7.5C4.5 7.5 2.5 7 0.5 4Z" fill="#e8e8e8"/><circle cx="6.5" cy="4" r="2.2" fill="#535353"/><circle cx="6.5" cy="4" r="1.1" fill="#e8e8e8"/></svg>
<div class="a" style="left:431.3px;top:469.3px;width:26px;height:17.4px;background:#3d3d3d;"></div>
<svg class="a" style="left:436.5px;top:473px;" width="21" height="13" viewBox="0 0 21 13"><defs><pattern id="ck" width="2" height="2" patternUnits="userSpaceOnUse"><rect width="2" height="2" fill="#f2f2f2"/><rect width="1" height="1" fill="#c4c4c4"/><rect x="1" y="1" width="1" height="1" fill="#c4c4c4"/></pattern></defs><rect x="0" y="0.3" width="9" height="10.7" fill="url(#ck)"/><rect x="8.5" y="0" width="10" height="1.2" fill="#e8e8e8"/><rect x="11.5" y="4.6" width="7" height="6.4" fill="#3d3d3d" stroke="#e0e0e0" stroke-width="1"/><rect x="10.4" y="3.5" width="2.2" height="2.2" fill="#e0e0e0"/><rect x="17.4" y="3.5" width="2.2" height="2.2" fill="#e0e0e0"/><rect x="10.4" y="9.9" width="2.2" height="2.2" fill="#e0e0e0"/><rect x="17.4" y="9.9" width="2.2" height="2.2" fill="#e0e0e0"/></svg>
<div class="a" style="left:404px;top:490px;width:179px;height:24px;background:#646464;"></div>
<div class="a" style="left:404px;top:489.3px;width:179px;height:0.8px;background:#484848;"></div>
<svg class="a" style="left:409px;top:499.3px;" width="13" height="8" viewBox="0 0 13 8"><path d="M0.5 4C2.5 1 4.5 0.5 6.5 0.5C8.5 0.5 10.5 1 12.5 4C10.5 7 8.5 7.5 6.5 7.5C4.5 7.5 2.5 7 0.5 4Z" fill="#f0f0f0"/><circle cx="6.5" cy="4" r="2.2" fill="#646464"/><circle cx="6.5" cy="4" r="1.1" fill="#f0f0f0"/></svg>
<div class="a" style="left:431.3px;top:494px;width:25.4px;height:16.7px;background:#565656;border:1px solid #3a3a3a"></div>
<svg class="a" style="left:429.3px;top:492.3px;" width="30" height="21" viewBox="0 0 30 21"><path d="M0.5 4V0.5H4M26 0.5H29.5V4M0.5 17V20.5H4M26 20.5H29.5V17" stroke="#e0e0e0" stroke-width="1" fill="none"/></svg>
<div class="a" style="left:436.7px;top:497.7px;width:16px;height:10.6px;background:#ffffff;"></div>
<svg class="a" style="left:561px;top:498px;" width="9" height="11" viewBox="0 0 9 11"><path d="M2.3 4.6V3A2.2 2.2 0 0 1 6.7 3V4.6" stroke="#e6e6e6" stroke-width="1.1" fill="none"/><rect x="0.8" y="4.6" width="7.4" height="5.8" stroke="#e6e6e6" stroke-width="1.1" fill="none"/><rect x="3.9" y="6.4" width="1.2" height="2" fill="#e6e6e6"/></svg>
<div class="a" style="left:410px;top:537px;width:185px;height:19px;background:#585858;"></div>
<svg class="a" style="left:420px;top:542px;" width="9.5" height="9.5" viewBox="0 0 9.5 9.5"><rect x="0.5" y="0.5" width="8.5" height="8.5" stroke="#cdcdcd" stroke-width="1" fill="none"/><path d="M4.75 2.4V7.1M2.4 4.75H7.1" stroke="#cdcdcd" stroke-width="1"/></svg>
<svg class="a" style="left:441.5px;top:541.3px;" width="9" height="10.5" viewBox="0 0 9 10.5"><path d="M0.3 2H8.7M3 1.8V0.5H6V1.8" stroke="#cdcdcd" stroke-width="0.9" fill="none"/><path d="M1.5 2.6V10H7.5V2.6" stroke="#cdcdcd" stroke-width="1" fill="none"/><path d="M3.4 4V8.6M5.6 4V8.6" stroke="#cdcdcd" stroke-width="0.7"/></svg>
<svg class="a" style="left:461.4px;top:543.3px;" width="10" height="7.6" viewBox="0 0 10 7.6"><path d="M0 0.5H3.6L4.5 1.6H10V7.6H0Z" fill="#cdcdcd"/></svg>
<div class="a" style="left:474.5px;top:549.8px;width:10.5px;height:1.2px;background:#cdcdcd;"></div>
<svg class="a" style="left:497px;top:542px;" width="9" height="9" viewBox="0 0 9 9"><circle cx="4.5" cy="4.5" r="3.8" stroke="#cdcdcd" stroke-width="1.2" fill="none"/><path d="M4.5 0.7A3.8 3.8 0 0 1 4.5 8.3Z" fill="#cdcdcd" transform="rotate(40 4.5 4.5)"/></svg>
<div class="a" style="left:506.3px;top:552.3px;width:1.4px;height:1.4px;background:#cdcdcd;"></div>
<svg class="a" style="left:518.4px;top:543.3px;" width="10.8" height="7.6" viewBox="0 0 10.8 7.6"><path d="M0 0.5H3.8L4.8 1.6H10.8V7.6H0Z" fill="#cdcdcd"/></svg>
<svg class="a" style="left:542.3px;top:542px;" width="9.5" height="9.5" viewBox="0 0 9.5 9.5"><rect x="0.5" y="0.5" width="8.5" height="8.5" stroke="#cdcdcd" stroke-width="1" fill="none"/><path d="M4.75 2.4V7.1M2.4 4.75H7.1" stroke="#cdcdcd" stroke-width="1"/></svg>
<svg class="a" style="left:563px;top:541.3px;" width="9" height="10.5" viewBox="0 0 9 10.5"><path d="M0.3 2H8.7M3 1.8V0.5H6V1.8" stroke="#cdcdcd" stroke-width="0.9" fill="none"/><path d="M1.5 2.6V10H7.5V2.6" stroke="#cdcdcd" stroke-width="1" fill="none"/><path d="M3.4 4V8.6M5.6 4V8.6" stroke="#cdcdcd" stroke-width="0.7"/></svg>
<div class="a" style="left:404px;top:557.5px;width:191px;height:1.5px;background:#3c3c3c;"></div>
<div class="a" style="left:404px;top:559px;width:42px;height:27px;background:#535353;"></div>
<div class="a" style="left:585px;top:566.8px;width:6.5px;height:5.2px;background:#8c8c8c;"></div>
<div class="a" style="left:36px;top:568px;width:353px;height:14px;background:#4d4d4d;"></div>
<div class="a" style="left:36px;top:568px;width:38px;height:14px;background:#474747;"></div>
<div class="a" style="left:74px;top:568px;width:151px;height:14px;background:#535353;"></div>
<svg class="a" style="left:216.5px;top:571.5px;" width="5" height="9" viewBox="0 0 5 9"><path d="M1 0.8L3.4 4L1 7.2" stroke="#c4c4c4" stroke-width="1" fill="none"/></svg>
<div class="a" style="left:0px;top:582px;width:600px;height:4px;background:#4c4c4c;"></div>
<div class="a" style="left:36px;top:582px;width:561px;height:1px;background:#3a3a3a;"></div>
<div class="a" style="left:389px;top:568px;width:14px;height:4px;background:#4c4c4c;"></div>
<svg class="a" style="left:0;top:0" width="600" height="586" viewBox="0 0 600 586"><g fill="none" stroke-width="1.8" stroke-linejoin="miter" stroke-linecap="butt"><polyline points="101.40,284.00 106.80,284.00" stroke="#d34545"/><polyline points="109.52,284.00 114.92,284.00" stroke="#d34745"/><polyline points="117.64,284.00 123.04,284.00" stroke="#d34945"/><polyline points="125.75,284.00 131.15,284.00" stroke="#d34a45"/><polyline points="133.87,284.00 139.27,284.00" stroke="#d35745"/><polyline points="141.99,284.00 147.39,284.00" stroke="#d39045"/><polyline points="150.11,284.00 155.51,284.00" stroke="#d3c845"/><polyline points="158.22,284.00 163.62,284.00" stroke="#b1d345"/><polyline points="166.34,284.00 171.74,284.00" stroke="#7fd345"/><polyline points="174.46,284.00 179.86,284.00" stroke="#4ad345"/><polyline points="182.58,284.00 187.98,284.00" stroke="#45d36c"/><polyline points="190.69,284.00 196.09,284.00" stroke="#45d396"/><polyline points="198.81,284.00 204.21,284.00" stroke="#45d3ba"/><polyline points="206.93,284.00 212.33,284.00" stroke="#45ced3"/><polyline points="215.05,284.00 220.45,284.00" stroke="#45bfd3"/><polyline points="223.16,284.00 225.80,284.00 225.80,286.76" stroke="#45a3d3"/><polyline points="225.80,289.48 225.80,294.88" stroke="#2b53b9"/><polyline points="225.80,297.60 225.80,303.00" stroke="#362bb9"/><polyline points="225.80,305.72 225.80,311.12" stroke="#642bb9"/><polyline points="225.80,313.84 225.80,319.24" stroke="#a145d3"/><polyline points="225.80,321.95 225.80,327.35" stroke="#c445d3"/><polyline points="225.80,330.07 225.80,335.47" stroke="#d345ad"/><polyline points="225.80,338.19 225.80,343.59" stroke="#d3457e"/><polyline points="225.80,346.31 225.80,351.71" stroke="#d3455c"/><polyline points="225.80,354.42 225.80,359.82" stroke="#d3454f"/><polyline points="225.80,362.54 225.80,366.60 224.46,366.60" stroke="#d34546"/><polyline points="221.74,366.60 216.34,366.60" stroke="#d3454a"/><polyline points="213.62,366.60 208.22,366.60" stroke="#d34550"/><polyline points="205.51,366.60 200.11,366.60" stroke="#d34556"/><polyline points="197.39,366.60 191.99,366.60" stroke="#d3455c"/><polyline points="189.27,366.60 183.87,366.60" stroke="#d34576"/><polyline points="181.15,366.60 175.75,366.60" stroke="#d34590"/><polyline points="173.04,366.60 167.64,366.60" stroke="#d345be"/><polyline points="164.92,366.60 159.52,366.60" stroke="#b545d3"/><polyline points="156.80,366.60 151.40,366.60" stroke="#8e45d3"/><polyline points="148.68,366.60 143.28,366.60" stroke="#532bb9"/><polyline points="140.56,366.60 135.16,366.60" stroke="#342bb9"/><polyline points="132.45,366.60 127.05,366.60" stroke="#2b47b9"/><polyline points="124.33,366.60 118.93,366.60" stroke="#4590d3"/><polyline points="116.21,366.60 110.81,366.60" stroke="#45b8d3"/><polyline points="108.09,366.60 102.69,366.60" stroke="#45d2d3"/><polyline points="101.40,365.18 101.40,359.78" stroke="#45d38c"/><polyline points="101.40,357.06 101.40,351.66" stroke="#45d35d"/><polyline points="101.40,348.94 101.40,343.54" stroke="#5bd345"/><polyline points="101.40,340.82 101.40,335.42" stroke="#89d345"/><polyline points="101.40,332.71 101.40,327.31" stroke="#bbd345"/><polyline points="101.40,324.59 101.40,319.19" stroke="#d3a745"/><polyline points="101.40,316.47 101.40,311.07" stroke="#d35845"/><polyline points="101.40,308.35 101.40,302.95" stroke="#d34d45"/><polyline points="101.40,300.24 101.40,294.84" stroke="#d34a45"/><polyline points="101.40,292.12 101.40,286.72" stroke="#d34745"/><polyline points="101.40,289.40 101.40,284.00" stroke="#d34645"/></g></svg>
<svg class="a" style="left:0px;top:0px;" width="3" height="3" viewBox="0 0 3 3"><path d="M0 0H2.6L0 2.6Z" fill="#e8e8e8"/></svg>
<svg class="a" style="left:597px;top:0px;" width="3" height="3" viewBox="0 0 3 3"><path d="M3 0H0.4L3 2.6Z" fill="#e8e8e8"/></svg>
<div class="t" style="left:10.2px;top:8.27px;font-size:7px;color:#c0e0f4;font-weight:bold;transform:scaleX(0.9109);">Ps</div>
<div class="t" style="left:31.6px;top:7.84px;font-size:10px;color:#e2e2e2;transform:scaleX(0.8930);-webkit-text-stroke:0.25px currentColor;">File</div>
<div class="t" style="left:56.5px;top:7.84px;font-size:10px;color:#e2e2e2;transform:scaleX(0.9226);-webkit-text-stroke:0.25px currentColor;">Edit</div>
<div class="t" style="left:82.6px;top:7.84px;font-size:10px;color:#e2e2e2;transform:scaleX(0.9497);-webkit-text-stroke:0.25px currentColor;">Image</div>
<div class="t" style="left:119.1px;top:7.84px;font-size:10px;color:#e2e2e2;transform:scaleX(0.8954);-webkit-text-stroke:0.25px currentColor;">Layer</div>
<div class="t" style="left:151.7px;top:7.84px;font-size:10px;color:#e2e2e2;transform:scaleX(0.9130);-webkit-text-stroke:0.25px currentColor;">Type</div>
<div class="t" style="left:181.7px;top:7.84px;font-size:10px;color:#e2e2e2;transform:scaleX(0.9210);-webkit-text-stroke:0.25px currentColor;">Select</div>
<div class="t" style="left:216.7px;top:7.84px;font-size:10px;color:#e2e2e2;transform:scaleX(0.9445);-webkit-text-stroke:0.25px currentColor;">Filter</div>
<div class="t" style="left:247.7px;top:7.84px;font-size:10px;color:#e2e2e2;transform:scaleX(0.9612);-webkit-text-stroke:0.25px currentColor;">3D</div>
<div class="t" style="left:269.3px;top:7.84px;font-size:10px;color:#e2e2e2;transform:scaleX(0.9628);-webkit-text-stroke:0.25px currentColor;">View</div>
<div class="t" style="left:300px;top:7.84px;font-size:10px;color:#e2e2e2;transform:scaleX(0.9838);-webkit-text-stroke:0.25px currentColor;">Window</div>
<div class="t" style="left:345.7px;top:7.84px;font-size:10px;color:#e2e2e2;transform:scaleX(0.9719);-webkit-text-stroke:0.25px currentColor;">Help</div>
<div class="t" style="left:100.5px;top:33.28px;font-size:9px;color:#dedede;transform:scaleX(0.8643);-webkit-text-stroke:0.1px currentColor;">Shape</div>
<div class="t" style="left:158.7px;top:33.68px;font-size:9px;color:#cfcfcf;transform:scaleX(0.8929);-webkit-text-stroke:0.1px currentColor;">Fill:</div>
<div class="t" style="left:203.7px;top:33.68px;font-size:9px;color:#cfcfcf;transform:scaleX(0.8592);-webkit-text-stroke:0.1px currentColor;">Stroke:</div>
<div class="t" style="left:263px;top:32.48px;font-size:9px;color:#e4e4e4;transform:scaleX(0.9267);-webkit-text-stroke:0.1px currentColor;">26.44 px</div>
<div class="t" style="left:363px;top:32.48px;font-size:9px;color:#cfcfcf;transform:scaleX(0.8300);-webkit-text-stroke:0.1px currentColor;">W:</div>
<div class="t" style="left:381.2px;top:32.48px;font-size:9px;color:#e4e4e4;transform:scaleX(0.9521);-webkit-text-stroke:0.1px currentColor;">0 px</div>
<div class="t" style="left:442px;top:32.48px;font-size:9px;color:#cfcfcf;transform:scaleX(1.1111);-webkit-text-stroke:0.1px currentColor;">H:</div>
<div class="t" style="left:459px;top:32.48px;font-size:9px;color:#e4e4e4;transform:scaleX(0.9815);-webkit-text-stroke:0.1px currentColor;">0 px</div>
<div class="t" style="left:45.5px;top:58.16px;font-size:9.5px;color:#f2f2f2;font-weight:bold;transform:scaleX(0.9376);">Thuthuatphanmem @ 66.7% (Background, RGB/8#) *</div>
<div class="t" style="left:411px;top:66.94px;font-size:8.7px;color:#f2f2f2;font-weight:bold;transform:scaleX(0.9259);">Properties</div>
<div class="t" style="left:435.7px;top:95.23px;font-size:8px;color:#e2e2e2;transform:scaleX(0.9930);-webkit-text-stroke:0.1px currentColor;">Pixel Layer</div>
<div class="t" style="left:424.2px;top:119.44px;font-size:8.7px;color:#f0f0f0;font-weight:bold;transform:scaleX(0.9415);">Transform</div>
<div class="t" style="left:440.3px;top:139.43px;font-size:8px;color:#7c7c7c;transform:scaleX(0.9521);-webkit-text-stroke:0.1px currentColor;">W</div>
<div class="t" style="left:455px;top:139.43px;font-size:8px;color:#7c7c7c;transform:scaleX(1.0215);-webkit-text-stroke:0.1px currentColor;">7.5 in</div>
<div class="t" style="left:509px;top:139.43px;font-size:8px;color:#7c7c7c;transform:scaleX(1.0292);-webkit-text-stroke:0.1px currentColor;">X</div>
<div class="t" style="left:522px;top:139.43px;font-size:8px;color:#7c7c7c;transform:scaleX(1.0073);-webkit-text-stroke:0.1px currentColor;">0 in</div>
<div class="t" style="left:441.5px;top:159.43px;font-size:8px;color:#7c7c7c;transform:scaleX(1.0724);-webkit-text-stroke:0.1px currentColor;">H</div>
<div class="t" style="left:455px;top:159.43px;font-size:8px;color:#7c7c7c;transform:scaleX(0.9987);-webkit-text-stroke:0.1px currentColor;">4.68 in</div>
<div class="t" style="left:509px;top:159.43px;font-size:8px;color:#7c7c7c;transform:scaleX(1.0292);-webkit-text-stroke:0.1px currentColor;">Y</div>
<div class="t" style="left:522px;top:159.43px;font-size:8px;color:#7c7c7c;transform:scaleX(1.0073);-webkit-text-stroke:0.1px currentColor;">0 in</div>
<div class="t" style="left:456.2px;top:183.83px;font-size:8px;color:#6e6e6e;transform:scaleX(1.1181);-webkit-text-stroke:0.1px currentColor;">0.00°</div>
<div class="t" style="left:423.3px;top:214.44px;font-size:8.7px;color:#f0f0f0;font-weight:bold;transform:scaleX(0.9778);">Align and Distribute</div>
<div class="t" style="left:411px;top:233.83px;font-size:8px;color:#c8c8c8;transform:scaleX(1.0342);-webkit-text-stroke:0.1px currentColor;">Align:</div>
<div class="t" style="left:423.3px;top:302.44px;font-size:8.7px;color:#f0f0f0;font-weight:bold;transform:scaleX(0.9192);">Quick Actions</div>
<div class="t" style="left:450px;top:326.83px;font-size:8px;color:#e0e0e0;transform:scaleX(0.9904);-webkit-text-stroke:0.1px currentColor;">Remove Background</div>
<div class="t" style="left:411px;top:375.84px;font-size:8.7px;color:#f2f2f2;font-weight:bold;transform:scaleX(0.8745);">Layers</div>
<div class="t" style="left:424.3px;top:403.83px;font-size:8px;color:#ececec;transform:scaleX(0.9990);-webkit-text-stroke:0.1px currentColor;">Kind</div>
<div class="t" style="left:413px;top:427.23px;font-size:8px;color:#727272;transform:scaleX(1.0085);-webkit-text-stroke:0.1px currentColor;">Normal</div>
<div class="t" style="left:517.3px;top:427.23px;font-size:8px;color:#727272;transform:scaleX(1.0019);-webkit-text-stroke:0.1px currentColor;">Opacity:</div>
<div class="t" style="left:553px;top:427.23px;font-size:8px;color:#6c6c6c;transform:scaleX(0.9771);-webkit-text-stroke:0.1px currentColor;">100%</div>
<div class="t" style="left:408.3px;top:449.43px;font-size:8px;color:#cccccc;transform:scaleX(0.9935);-webkit-text-stroke:0.1px currentColor;">Lock:</div>
<div class="t" style="left:535px;top:449.43px;font-size:8px;color:#727272;transform:scaleX(1.0680);-webkit-text-stroke:0.1px currentColor;">Fill:</div>
<div class="t" style="left:553px;top:449.43px;font-size:8px;color:#6c6c6c;transform:scaleX(0.9771);-webkit-text-stroke:0.1px currentColor;">100%</div>
<div class="t" style="left:465.7px;top:474.53px;font-size:8px;color:#e6e6e6;transform:scaleX(0.9976);-webkit-text-stroke:0.1px currentColor;">Rectangle 1</div>
<div class="t" style="left:465.7px;top:499.23px;font-size:8px;color:#f0f0f0;font-style:italic;transform:scaleX(1.0210);-webkit-text-stroke:0.1px currentColor;">Background</div>
<div class="t" style="left:411.7px;top:564.34px;font-size:8.7px;color:#f2f2f2;font-weight:bold;transform:scaleX(0.9219);">History</div>
<div class="t" style="left:40.8px;top:570.98px;font-size:9px;color:#dcdcdc;transform:scaleX(0.9564);-webkit-text-stroke:0.1px currentColor;">66.67%</div>
<div class="t" style="left:111.3px;top:570.98px;font-size:9px;color:#dcdcdc;transform:scaleX(0.8614);-webkit-text-stroke:0.1px currentColor;">Doc: 1.00M/0 bytes</div>
</body></html>
